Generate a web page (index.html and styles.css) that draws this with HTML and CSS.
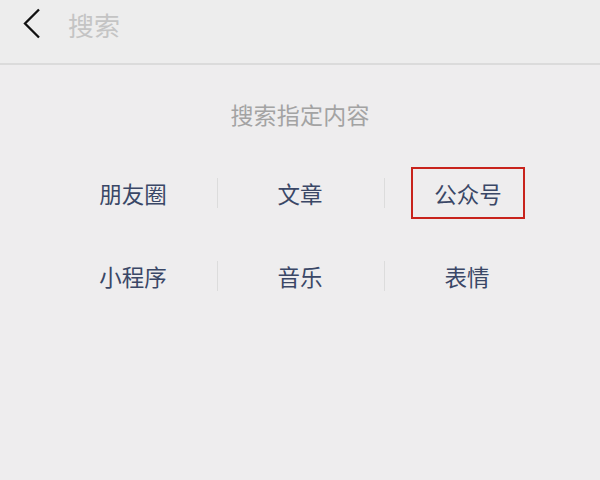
FILE: index.html
```html
<!DOCTYPE html>
<html lang="zh">
<head>
<meta charset="utf-8">
<link rel="stylesheet" href="styles.css">
</head>
<body>
<div class="topbar">
  <svg class="back" width="20" height="32" viewBox="0 0 20 32"><polyline points="17,1.5 3,15.5 17,29.5" fill="none" stroke="#111" stroke-width="2.3"/></svg>
  <span class="placeholder">搜索</span>
</div>
<div class="content">
  <div class="hint">搜索指定内容</div>
  <div class="grid">
    <div class="cell"><span class="label">朋友圈</span></div>
    <div class="cell sep"><span class="label">文章</span></div>
    <div class="cell sep"><span class="label boxed">公众号</span></div>
    <div class="cell"><span class="label">小程序</span></div>
    <div class="cell sep"><span class="label">音乐</span></div>
    <div class="cell sep"><span class="label">表情</span></div>
  </div>
</div>
</body>
</html>
```
FILE: styles.css
```css
html, body {
  margin: 0;
  padding: 0;
  background: #eeedee;
  font-family: "Noto Sans CJK SC", "Noto Sans", sans-serif;
}
body {
  width: 600px;
  height: 480px;
  overflow: hidden;
}
.topbar {
  height: 65px;
  box-sizing: border-box;
  border-bottom: 2px solid #dbdbdb;
  display: flex;
  align-items: flex-start;
  padding-left: 22px;
  background: #ededed;
}
.back {
  margin-top: 8px;
  display: block;
}
.placeholder {
  margin-left: 26px;
  margin-top: 5px;
  font-size: 26px;
  line-height: 40px;
  color: #c4c4c4;
}
.content {
  display: flex;
  flex-direction: column;
  align-items: center;
}
.hint {
  margin-top: 32px;
  font-size: 23px;
  line-height: 34px;
  color: #a3a3a3;
  letter-spacing: 0.2px;
}
.grid {
  margin-top: 47px;
  width: 501px;
  display: grid;
  grid-template-columns: repeat(3, 167px);
  grid-auto-rows: 30px;
  row-gap: 53px;
}
.cell {
  display: flex;
  align-items: center;
  justify-content: center;
  position: relative;
}
.sep::before {
  content: "";
  position: absolute;
  left: 0;
  top: 0;
  bottom: 0;
  width: 1px;
  background: #dcdcdc;
}
.label {
  font-size: 22.5px;
  line-height: 30px;
  color: #3a4766;
}
.boxed {
  outline: 2px solid #c8231c;
  outline-offset: 0;
  padding: 9px 21px 9px 21px;
  margin-left: 2px;
}
```
